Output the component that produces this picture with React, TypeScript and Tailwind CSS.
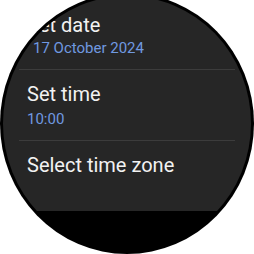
import React from 'react';

type Row = {
  title: string;
  value?: string;
};

const rows: Row[] = [
  { title: 'Set date', value: '17 October 2024' },
  { title: 'Set time', value: '10:00' },
  { title: 'Select time zone' },
];

function SettingRow({ row, first, last }: { row: Row; first: boolean; last: boolean }) {
  return (
    <div
      className={
        last
          ? 'px-2 pt-[12px] pb-[40px]'
          : 'px-2 pt-[12px] pb-[11px] border-b border-[#3c3c3c]'
      }
    >
      <p
        className={
          first
            ? 'mt-[2px] text-[20px] leading-6 text-[#f2f2f2] whitespace-nowrap'
            : 'text-[20px] leading-6 text-[#f2f2f2] whitespace-nowrap'
        }
      >
        {row.title}
      </p>
      {row.value && (
        <p
          className={
            first
              ? 'mt-[1px] ml-[6px] text-[15px] leading-5 text-[#7099e0] whitespace-nowrap'
              : 'mt-[3px] text-[15px] leading-5 text-[#7099e0] whitespace-nowrap'
          }
        >
          {row.value}
        </p>
      )}
    </div>
  );
}

function App() {
  return (
    <div
      className="w-[254px] h-[254px] bg-white overflow-hidden"
      style={{ fontFamily: 'Roboto, "Noto Sans", sans-serif' }}
    >
      {/* watch face: slightly taller than wide, top runs past the frame */}
      <div className="w-[254px] h-[261px] -mt-[7px] rounded-[50%] bg-black p-[3px] overflow-hidden">
        <div className="w-full h-full rounded-[50%] overflow-hidden">
          <div className="h-[215px] bg-[#262626] px-[16px] pt-[3px] overflow-hidden">
            {rows.map((row, i) => (
              <SettingRow
                key={row.title}
                row={row}
                first={i === 0}
                last={i === rows.length - 1}
              />
            ))}
          </div>
        </div>
      </div>
    </div>
  );
}

export default App;
